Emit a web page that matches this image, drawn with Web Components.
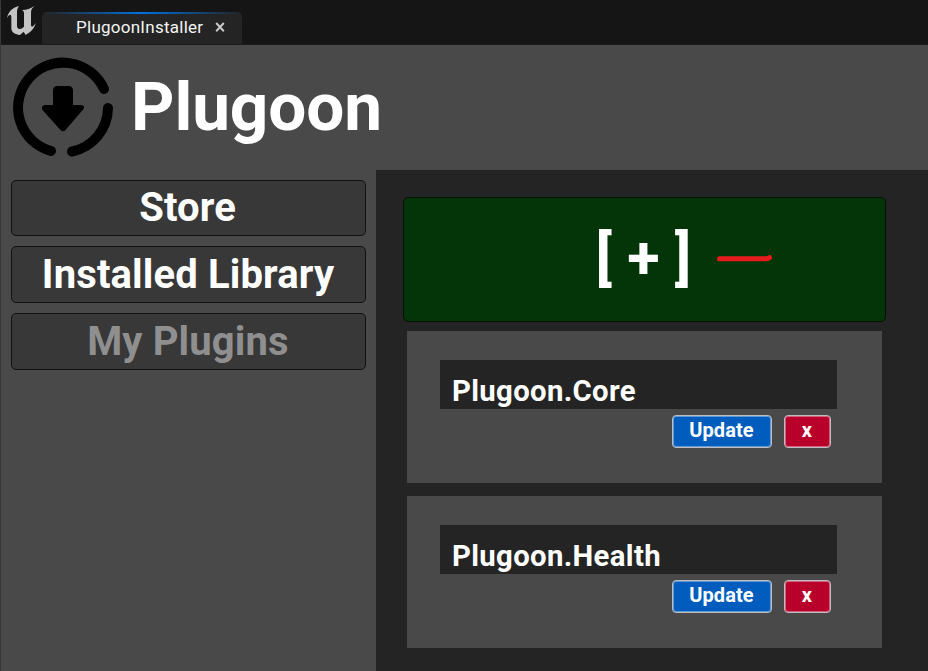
<!DOCTYPE html>
<html lang="en">
<head>
<meta charset="utf-8">
<title>PlugoonInstaller</title>
<style>
html,body{margin:0;height:100%;overflow:hidden;background:#494949}
body{font-family:Roboto,"Liberation Sans",sans-serif;color:#fff}
</style>
</head>
<body>
<plugoon-app></plugoon-app>
<script>
const define = (name, markup) => customElements.define(name, class extends HTMLElement {
  constructor() {
    super();
    this.attachShadow({ mode: 'open' }).innerHTML = markup;
  }
});

define('editor-tab', `
<style>
:host{display:flex;box-sizing:border-box;width:200px;height:32px;padding:0 0 2px 34px;align-items:center;background:#242424;border-radius:5px 5px 0 0;position:relative;overflow:hidden;font-size:17px;line-height:30px;color:#f4f4f4}
:host::before{content:"";position:absolute;left:0;right:0;top:0;height:2px;background:linear-gradient(90deg,#242424,#0070e0 50%,#242424)}
span{width:139px;white-space:nowrap;letter-spacing:.26px}
svg{width:10px;height:10px}
</style>
<span><slot></slot></span>
<svg viewBox="0 0 10 10"><path d="M1.200 1 8.800 9.200M8.800 1 1.200 9.200" stroke="#c8c8c8" stroke-width="2"/></svg>`);

define('tab-bar', `
<style>
:host{display:flex;box-sizing:border-box;height:45px;background:#151515;border-bottom:1px solid #1b1b1b;align-items:flex-end}
svg{width:42px;height:44px;flex:none}
</style>
<svg viewBox="0 0 126 132"><path fill="#c4c4c4" d="M21 54C25 36 36 23 57 18Q51 25 51 33V77Q51 86 59 87Q66 87 72 80V39Q72 33 66 30Q84 31 103 18Q93 26 93 36V76Q94 82 99 79Q103 76 107 69C104 86 91 96 77 105L71 95L60 105C46 104 34 98 34 85V51Q34 44 30 44Q25 45 21 54Z"/></svg>
<slot></slot>`);

define('brand-header', `
<style>
:host{display:flex;height:125px;align-items:flex-start}
svg{width:130px;height:125px;flex:none}
h1{margin:22px 0 0 1px;font-size:67.500px;line-height:80px;font-weight:700;white-space:nowrap;letter-spacing:-.1px}
</style>
<svg viewBox="0 0 130 125">
<path d="M51 106A45 45 0 1 1 104 44M108 63A45 45 0 0 1 72 106.5" fill="none" stroke="#000" stroke-width="10" stroke-linecap="round"/>
<path d="M57.500 41H68.500Q73 41 73 45.500V60H81Q85.500 60.500 83.500 64L65.500 85Q63 87.500 60.500 85L42.500 65Q40.500 61 45 60H53V45.500Q53 41 57.500 41Z"/>
</svg>
<h1><slot></slot></h1>`);

define('nav-button', `
<style>
:host{display:block;box-sizing:border-box;height:57px;border:1px solid #111;border-radius:5px;background:#383838;text-align:center;font-size:40px;line-height:55px;font-weight:700;white-space:nowrap;letter-spacing:.13px;padding-right:1px}
:host([compact]){height:56px;line-height:53px;padding-right:2px}
:host([disabled]){color:#8f8f8f}
</style><slot></slot>`);

define('nav-list', `
<style>
:host{display:flex;box-sizing:border-box;width:376px;flex-direction:column;gap:10px;padding:10px 10px 0 11px;flex:none}
</style><slot></slot>`);

define('add-button', `
<style>
:host{display:block;box-sizing:border-box;width:483px;height:125px;margin:0 0 9px -4px;padding-right:2px;background:#043508;border:1px solid #071007;border-radius:5px;text-align:center;font-size:59.500px;line-height:121px;font-weight:700;letter-spacing:.2px;position:relative}
svg{position:absolute;left:312px;top:55px;width:58px;height:12px}
</style>
<slot></slot>
<svg viewBox="0 0 58 12"><path d="M3.500 5.700H50Q52 5.500 53.500 4.700" fill="none" stroke="#e61b1b" stroke-width="5" stroke-linecap="round" stroke-linejoin="round"/></svg>`);

define('action-button', `
<style>
:host{display:block;box-sizing:border-box;width:100px;height:33px;background:#005dbd;border:1px solid #bdbdc2;box-shadow:inset 0 0 0 1px #ffffff60;border-radius:4px;padding-right:1px;text-align:center;font-size:20px;line-height:29px;font-weight:700;letter-spacing:.1px}
:host([danger]){width:47px;background:#b9002b}
</style><slot></slot>`);

define('plugin-card', `
<style>
:host{display:block;box-sizing:border-box;width:475px;height:152px;margin-bottom:13px;padding:29px 45px 0 33px;background:#494949}
.name{height:49px;box-sizing:border-box;padding:12px 0 0 12px;background:#242424;font-size:29.300px;line-height:38px;font-weight:700;letter-spacing:.35px;white-space:nowrap}
.actions{display:flex;justify-content:flex-end;gap:12px;padding:6px 6px 0 0}
</style>
<div class="name"><slot></slot></div>
<div class="actions"><action-button>Update</action-button><action-button danger>x</action-button></div>`);

define('plugin-pane', `
<style>
:host{display:block;flex:1;box-sizing:border-box;padding:27px 0 0 31px;background:#242424}
</style><slot></slot>`);

define('plugoon-app', `
<style>
:host{display:flex;flex-direction:column;box-sizing:border-box;width:928px;height:671px;background:#494949;overflow:hidden;position:relative}
:host::before{content:"";position:absolute;left:0;top:0;bottom:0;width:1px;background:#383838;z-index:1}
.body{display:flex;flex:1;min-height:0}
</style>
<tab-bar><editor-tab>PlugoonInstaller</editor-tab></tab-bar>
<brand-header>Plugoon</brand-header>
<div class="body">
<nav-list><nav-button compact>Store</nav-button><nav-button>Installed Library</nav-button><nav-button disabled>My Plugins</nav-button></nav-list>
<plugin-pane><add-button>[ + ]</add-button><plugin-card>Plugoon.Core</plugin-card><plugin-card>Plugoon.Health</plugin-card></plugin-pane>
</div>`);
</script>
</body>
</html>
